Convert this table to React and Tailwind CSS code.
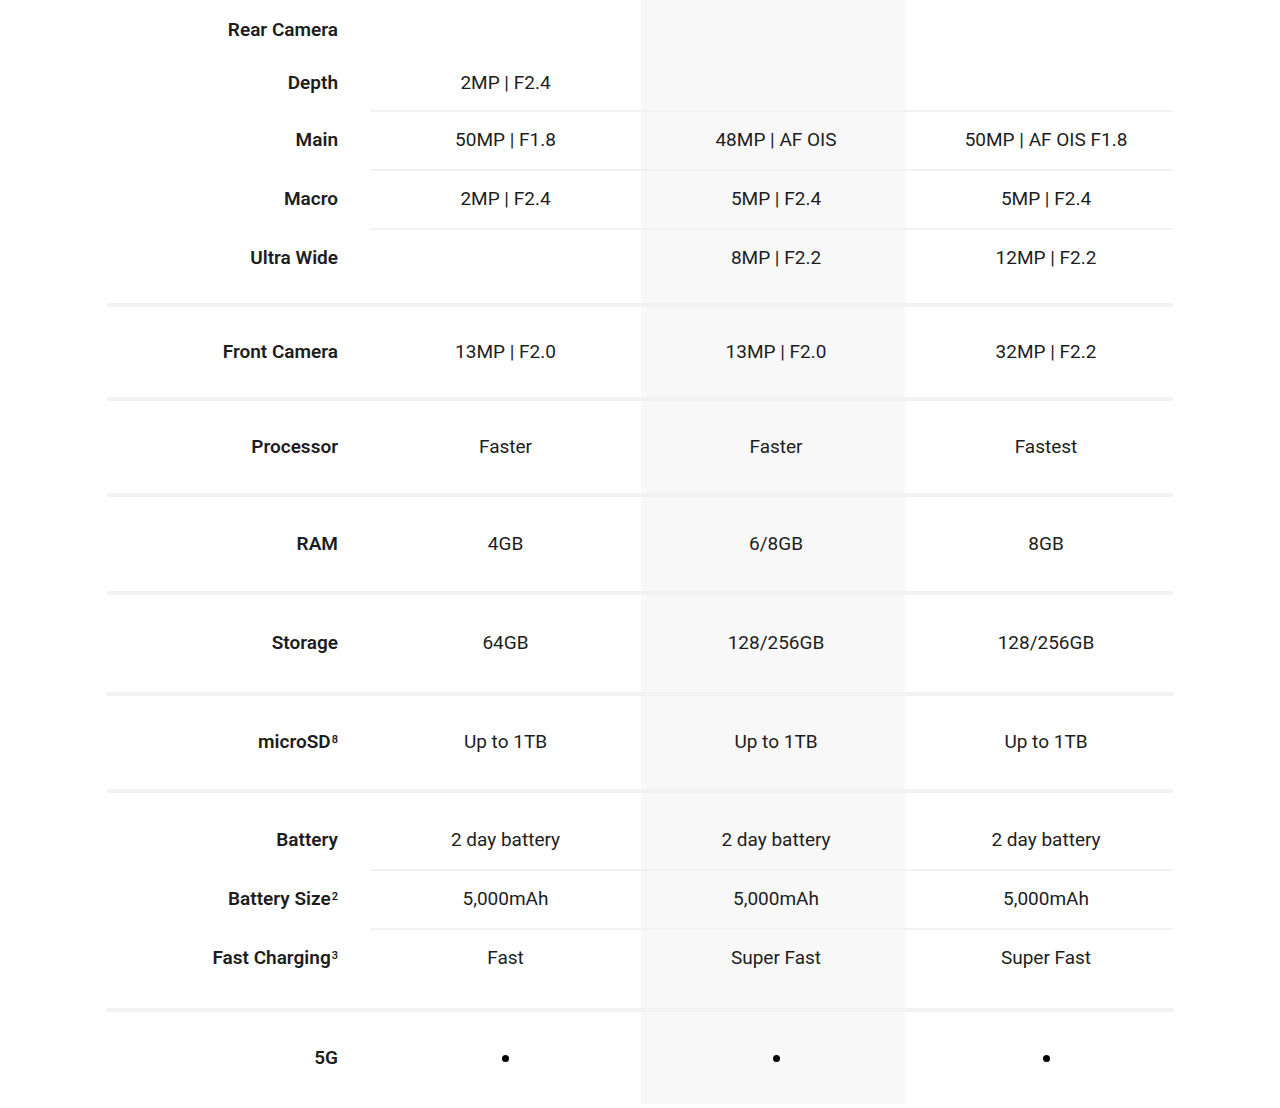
const groups = [
  {
    pt: 'pt-0',
    pb: 'pb-[16px]',
    rows: [
      { label: 'Rear Camera', h: 'h-[56px]', vals: ['', '', ''], head: true },
      { label: 'Depth', h: 'h-[54px]', vals: ['2MP | F2.4', '', ''] },
      { label: 'Main', h: 'h-[59px]', vals: ['50MP | F1.8', '48MP | AF OIS', '50MP | AF OIS F1.8'], line: true },
      { label: 'Macro', h: 'h-[59px]', vals: ['2MP | F2.4', '5MP | F2.4', '5MP | F2.4'], line: true },
      { label: 'Ultra Wide', h: 'h-[59px]', vals: ['', '8MP | F2.2', '12MP | F2.2'], line: true },
    ],
  },
  { rows: [{ label: 'Front Camera', h: 'h-[90px]', vals: ['13MP | F2.0', '13MP | F2.0', '32MP | F2.2'] }] },
  { rows: [{ label: 'Processor', h: 'h-[92px]', vals: ['Faster', 'Faster', 'Fastest'] }] },
  { rows: [{ label: 'RAM', h: 'h-[94px]', vals: ['4GB', '6/8GB', '8GB'] }] },
  { rows: [{ label: 'Storage', h: 'h-[97px]', vals: ['64GB', '128/256GB', '128/256GB'] }] },
  { rows: [{ label: 'microSD', sup: '8', h: 'h-[93px]', vals: ['Up to 1TB', 'Up to 1TB', 'Up to 1TB'] }] },
  {
    pt: 'pt-[18px]',
    pb: 'pb-[21px]',
    rows: [
      { label: 'Battery', h: 'h-[58px]', vals: ['2 day battery', '2 day battery', '2 day battery'] },
      { label: 'Battery Size', sup: '2', h: 'h-[59px]', vals: ['5,000mAh', '5,000mAh', '5,000mAh'], line: true },
      { label: 'Fast Charging', sup: '3', h: 'h-[59px]', vals: ['Fast', 'Super Fast', 'Super Fast'], line: true },
    ],
  },
  { rows: [{ label: '5G', h: 'h-[92px]', vals: ['dot', 'dot', 'dot'] }] },
]

// per value column: width, extra left pad to nudge the centred text, background
const cols = [
  { w: 'w-[271px]', pad: 'pl-0', bg: '' },
  { w: 'w-[264px]', pad: 'pl-[6px]', bg: 'bg-[#f8f8f8]' },
  { w: 'w-[268px]', pad: 'pl-[14px]', bg: '' },
]

function Value({ v }) {
  if (v === 'dot') return <span className="inline-block h-[7px] w-[7px] rounded-full bg-black" />
  return <span>{v}</span>
}

function Group({ group, first }) {
  const pt = group.pt || 'pt-0'
  const pb = group.pb || 'pb-0'
  return (
    <div className={first ? 'flex' : 'flex border-t-4 border-[#f2f2f2]'}>
      {/* labels */}
      <div className={`w-[263px] shrink-0 ${pt} ${pb}`}>
        {group.rows.map((r) => (
          <div
            key={r.label}
            className={`${r.h} flex items-center justify-end pr-[32px] text-[19px] font-semibold text-[#1d1d1d] ${r.line ? 'pt-[2px]' : ''} ${r.head ? 'pt-[4px]' : ''}`}
          >
            <span>
              {r.label}
              {r.sup && <sup className="ml-[1px] text-[11px] font-semibold">{r.sup}</sup>}
            </span>
          </div>
        ))}
      </div>
      {cols.map((c, ci) => (
        <div key={ci} className={`${c.w} shrink-0 ${c.bg} ${pt} ${pb}`}>
          {group.rows.map((r) => (
            <div
              key={r.label}
              className={`${r.h} flex items-center justify-center ${c.pad} text-[19px] text-[#1d1d1d] ${r.line ? 'border-t-2 border-[#f2f2f2]' : ''}`}
            >
              <Value v={r.vals[ci]} />
            </div>
          ))}
        </div>
      ))}
    </div>
  )
}

export default function App() {
  return (
    <div className="min-h-[1108px] w-full bg-white" style={{ fontFamily: 'Roboto, "Noto Sans", sans-serif' }}>
      <div className="ml-[107px] w-[1066px]">
        {groups.map((g, i) => (
          <Group key={i} group={g} first={i === 0} />
        ))}
      </div>
    </div>
  )
}
